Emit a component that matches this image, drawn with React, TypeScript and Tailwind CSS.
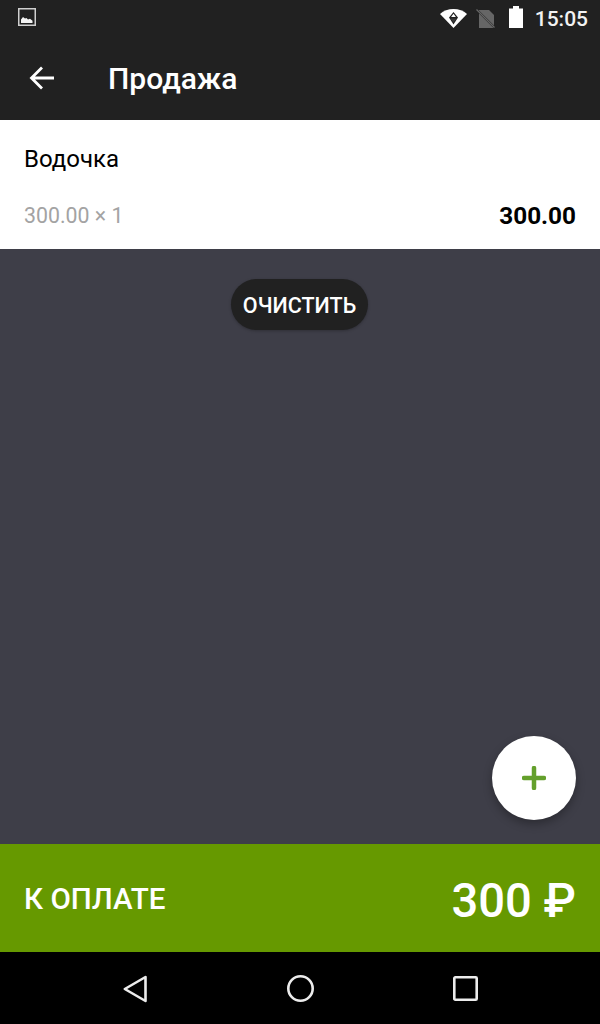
export default function App() {
  return (
    <div className="w-[600px] h-[1024px] flex flex-col overflow-hidden bg-black font-['Roboto',sans-serif]">
      <header className="h-[120px] shrink-0 bg-[#212121] flex flex-col">
        <div className="h-[36px] pl-[18px] pr-[12px] flex items-center justify-between">
          <svg width="18" height="18" viewBox="0 0 18 18" className="mb-[2px]">
            <rect x="0.75" y="0.75" width="16.5" height="16.5" fill="none" stroke="#cfcfcf" strokeWidth="1.5" />
            <path d="M3 15v-3.5l2-2.5 2 1.5 1.5-.5 1.5 1.5 2-.8 2.5 2V15z" fill="#f5f5f5" />
          </svg>
          <div className="flex items-center">
            <svg width="27" height="19" viewBox="0 0 27 19" className="mr-[9px] mt-[1px]">
              <path d="M0 5C3.5 1.8 8.3 0 13.5 0S23.5 1.8 27 5L13.5 19z" fill="#fff" />
              <path d="M13.5 3l4.5 5.500-4.500 7-4.500-7z" fill="#212121" />
              <path d="M13.5 4.800l2.400 3.200h-4.800z" fill="#fff" />
              <path d="M10.500 9.500h6l-3 4z" fill="#3a3a3a" />
            </svg>
            <svg width="19" height="20" viewBox="0 0 19 20" className="mr-[14px] mt-[1px]">
              <path d="M3 1h10l5 5v13H3z" fill="#666" />
              <path d="M1 1l18 18" stroke="#212121" strokeWidth="2" />
              <path d="M0.5 0.5l18 18" stroke="#666" strokeWidth="1.2" />
            </svg>
            <svg width="14" height="22" viewBox="0 0 14 22" className="mr-[12px] mb-[2px]">
              <path d="M0 2.500h4V0h6v2.500h4V22H0z" fill="#fff" />
            </svg>
            <span className="text-[21px] leading-[24px] font-medium text-[#f2f2f2] mt-[2px]">15:05</span>
          </div>
        </div>
        <div className="flex-1 flex items-center pl-[28px]">
          <svg width="28" height="28" viewBox="0 0 28 28" fill="none" className="mr-[52px]">
            <path d="M26 14H4M14 3.500L3.500 14 14 24.500" stroke="#fff" strokeWidth="2.800" />
          </svg>
          <h1 className="text-[30px] leading-[32px] font-medium text-white mt-[2px]">Продажа</h1>
        </div>
      </header>

      <section className="h-[129px] shrink-0 bg-white px-[24px] pt-[24px]">
        <div className="text-[24px] leading-[30px] text-black">Водочка</div>
        <div className="mt-[27px] flex items-center justify-between">
          <span className="text-[21.3px] leading-[30px] text-[#a3a3a3]">300.00 × 1</span>
          <span className="text-[24.3px] leading-[30px] font-bold text-black">300.00</span>
        </div>
      </section>

      <main className="relative flex-1 bg-[#3e3e48] flex flex-col items-center pt-[30px]">
        <button className="h-[51px] w-[137px] mr-[1px] pt-[3px] rounded-full bg-[#212121] text-white text-[21.5px] font-medium shadow-[0_1px_3px_rgba(0,0,0,0.25)]">
          ОЧИСТИТЬ
        </button>
        <button className="absolute right-[24px] bottom-[24px] w-[84px] h-[84px] rounded-full bg-white flex items-center justify-center shadow-[0_4px_10px_rgba(0,0,0,0.3)]">
          <svg width="24" height="24" viewBox="0 0 24 24" fill="none">
            <path d="M12 2v20M2 12h20" stroke="#64a02c" strokeWidth="4.500" strokeLinecap="round" />
          </svg>
        </button>
      </main>

      <section className="h-[108px] shrink-0 bg-[#669900] flex items-center justify-between px-[24px] text-white">
        <span className="text-[29.6px] font-medium mt-[2px]">К ОПЛАТЕ</span>
        <span className="text-[47.2px] font-medium mt-[6px]">300 ₽</span>
      </section>

      <nav className="h-[72px] shrink-0 bg-black flex items-center justify-center gap-[139.5px] pl-[1px] pt-[1px]">
        <svg width="24" height="28" viewBox="0 0 24 28" fill="none">
          <path d="M22.5 2v24L1.8 14z" stroke="#ececec" strokeWidth="2.6" strokeLinejoin="round" />
        </svg>
        <svg width="27" height="27" viewBox="0 0 27 27" fill="none">
          <circle cx="13.5" cy="13.5" r="12.2" stroke="#ececec" strokeWidth="2.6" />
        </svg>
        <svg width="25" height="25" viewBox="0 0 25 25" fill="none">
          <rect x="1.3" y="1.3" width="22.4" height="22.4" rx="1" stroke="#ececec" strokeWidth="2.6" />
        </svg>
      </nav>
    </div>
  );
}
